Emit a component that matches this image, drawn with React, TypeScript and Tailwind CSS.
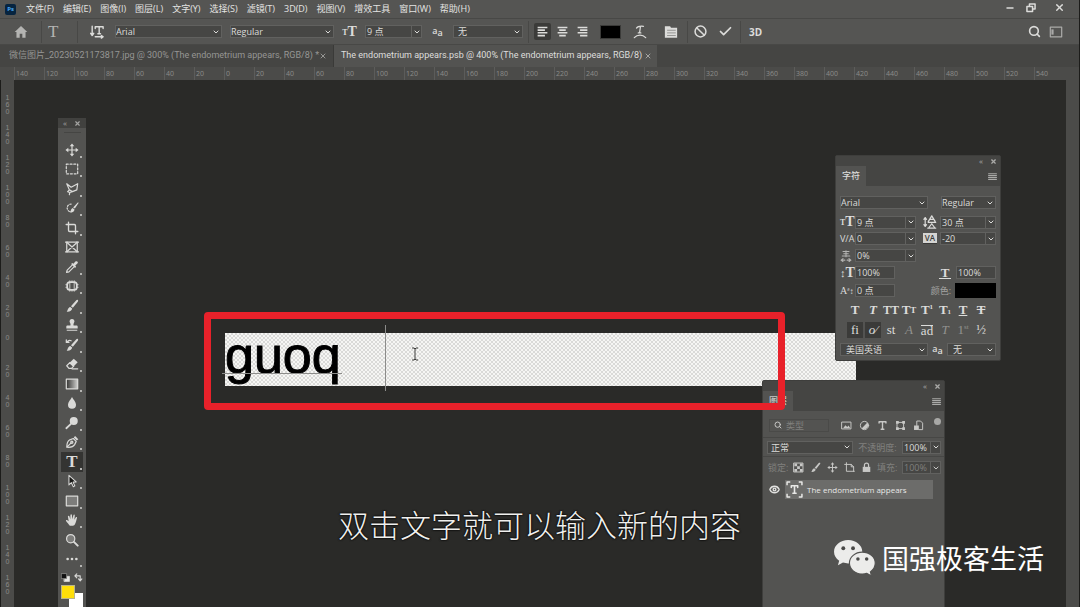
import React from 'react';
import { Ban, Check, ChevronDown, Crop, Eye, Minus, Search, X } from 'lucide-react';

const menus = ['文件(F)', '编辑(E)', '图像(I)', '图层(L)', '文字(Y)', '选择(S)', '滤镜(T)', '3D(D)', '视图(V)', '增效工具', '窗口(W)', '帮助(H)'];

const topMarks = Array.from({ length: 35 }, (_, i) => Math.abs(i * 20 - 140));
const leftMarks = Array.from({ length: 17 }, (_, i) => Math.abs(i * 20 - 160));

type SvgProps = { className?: string; children: React.ReactNode };

const Glyph = ({ className = 'size-[14px]', children }: SvgProps) => (
  <svg
    viewBox="0 0 16 16"
    className={`shrink-0 ${className}`}
    fill="none"
    stroke="currentColor"
    strokeWidth="1.4"
    strokeLinecap="round"
    strokeLinejoin="round"
    aria-hidden="true"
  >
    {children}
  </svg>
);

const solid = { fill: 'currentColor', stroke: 'none' };

const BrushShape = () => (
  <>
    <path {...solid} d="M14.6 1.2c.7.5.4 1.2 0 1.8L9 10 6.8 8.2l5.9-6.6c.6-.6 1.3-.8 1.9-.4z" />
    <path {...solid} d="M6 9l2.2 1.9c-.3 2.6-2.8 4-6.4 3.6C3.3 13.5 3 9.8 6 9z" />
  </>
);

const MoveShape = () => (
  <>
    <path d="M8 3v10M3 8h10" />
    <path {...solid} d="M8 .5l2.6 3.3H5.4zM8 15.5l2.6-3.3H5.4zM.5 8l3.3-2.6v5.2zM15.5 8l-3.3-2.6v5.2z" />
  </>
);

const tools: { name: string; icon: React.ReactNode; plain?: boolean }[] = [
  { name: '移动工具', icon: <Glyph><MoveShape /></Glyph> },
  { name: '矩形选框工具', icon: <Glyph><rect x="1.5" y="2.5" width="13" height="11" strokeDasharray="2.2 2.1" /></Glyph> },
  { name: '套索工具', icon: <Glyph><path d="M2 2l5 4 7.5-4-1 7-5 2L5 9 2 2zM5 9l-2 2 2.5 1-.5 2.5M5.5 12l3-1" /></Glyph> },
  {
    name: '快速选择工具',
    icon: (
      <Glyph>
        <path d="M7 3.5a4.5 4.5 0 1 0 0 9" strokeDasharray="1.5 1.9" />
        <path {...solid} d="M15.5 2.2l-4.2 6.4-2-1.3 5-5.3c.6-.5 1.3-.3 1.2.2zM8.8 8l2.1 1.6c-.4 2.7-2.5 3.6-5.4 3.2 1.6-1.2.8-3.8 3.3-4.8z" />
      </Glyph>
    ),
  },
  { name: '裁剪工具', icon: <Crop className="size-[14px]" strokeWidth={2.3} /> },
  {
    name: '图框工具',
    plain: true,
    icon: <Glyph><rect x="2" y="2.5" width="12" height="11" /><path d="M2 2.5l12 11M14 2.5l-12 11M.6 2.5h2M13.4 2.5h2M.6 13.5h2M13.4 13.5h2" /></Glyph>,
  },
  {
    name: '吸管工具',
    icon: (
      <Glyph>
        <path d="M8.5 5.5l-6 6-.7 2.7 2.7-.7 6-6" />
        <path {...solid} d="M7 4.5l1.3-1.2 1.3 1 2.3-2.5c1.7-1.5 3.8.6 2.3 2.3l-2.5 2.3 1 1.3L11.5 9z" />
      </Glyph>
    ),
  },
  {
    name: '修复工具',
    icon: <Glyph><rect x="2.5" y="3.5" width="11" height="9" rx="3" strokeWidth="2" /><path d="M5.5 2v12M8 2v2M8 12v2M10.5 2v12M1 6.5h2M1 9.5h2M13 6.5h2M13 9.5h2" strokeWidth="1" /></Glyph>,
  },
  { name: '画笔工具', icon: <Glyph><BrushShape /></Glyph> },
  {
    name: '仿制图章工具',
    icon: <Glyph><path {...solid} d="M8 1a2.8 2.8 0 0 1 2.3 4.4c-.7 1.1-.7 2.1-.5 3.1H13c1 0 1.5.6 1.5 1.5v2h-13v-2c0-.9.5-1.5 1.5-1.5h3.2c.2-1 .2-2-.5-3.1A2.8 2.8 0 0 1 8 1zM2 13.3h12v1.4H2z" /></Glyph>,
  },
  { name: '历史记录画笔工具', icon: <Glyph><BrushShape /><path d="M1.5 2v3h3M2 5c1.5-2 3.5-2.5 5-1.8" /></Glyph> },
  {
    name: '橡皮擦工具',
    icon: <Glyph><path d="M5.5 6.5L2 10l2.5 3h3L10 10.500z" /><path {...solid} d="M10 2l4.5 4-5 5L5 6.8z" /><path d="M8 13.5h6.5" /></Glyph>,
  },
  {
    name: '渐变工具',
    icon: (
      <Glyph>
        <defs>
          <linearGradient id="toolGradient">
            <stop offset="0" stopColor="#333331" />
            <stop offset="1" stopColor="#d0d0ce" />
          </linearGradient>
        </defs>
        <rect x="1.5" y="2.5" width="13" height="11" fill="url(#toolGradient)" />
      </Glyph>
    ),
  },
  { name: '模糊工具', icon: <Glyph><path {...solid} d="M8 1c1.5 3 4.6 5.6 4.6 9a4.6 4.6 0 0 1-9.2 0C3.4 6.6 6.5 4 8 1z" /></Glyph> },
  { name: '减淡工具', icon: <Glyph><circle cx="10" cy="5.8" r="4.6" {...solid} /><path d="M6.5 9.2L1.5 14" strokeWidth="2" /></Glyph> },
  {
    name: '钢笔工具',
    icon: <Glyph><path d="M2 14c0-4 1-7 3.5-8.5l4-1.5 3.3 3.3L11 11c-1.5 2.5-5 3.500-9 3zM2.5 13.5L7 9" /><circle cx="7.8" cy="8.3" r="1.2" /><path {...solid} d="M10 2.8l1.6-1.6 3.6 3.6-1.6 1.6z" /></Glyph>,
  },
  { name: '横排文字工具', icon: <span className="font-['Liberation_Serif',serif] text-[17px] leading-[16px] font-bold">T</span> },
  { name: '路径选择工具', icon: <Glyph><path d="M4.5 1.5v11l2.8-2.6 2.2 4.6 1.8-.9-2.1-4.3 3.6-.3z" fill="#1a1a18" strokeWidth="1.2" /></Glyph> },
  { name: '矩形工具', icon: <Glyph><rect x="1.5" y="2.5" width="13" height="11" fill="#7d7d7b" /></Glyph> },
  {
    name: '抓手工具',
    icon: (
      <Glyph>
        <path {...solid} d="M5.5 14.5C4 13 2.5 10.8 1.2 9.2c-.5-1 .7-1.7 1.5-1l1.5 1.2L3.300 4c-.1-1.1 1.3-1.4 1.7-.3l1 3.5.2-5c.1-1.1 1.6-1.1 1.7 0l.5 4.8 1.2-4.5c.3-1 1.7-.8 1.6.3l-.5 5 1.5-2.7c.6-.9 1.8-.4 1.5.7-.7 2.3-1 4.7-2.2 6.7-.6 1.2-1.3 2-2.5 2z" />
      </Glyph>
    ),
  },
  { name: '缩放工具', plain: true, icon: <Glyph><circle cx="6.5" cy="6.5" r="4.7" fill="#7d7d7b" /><path d="M10.2 10.2l4.3 4.3" strokeWidth="2.2" /></Glyph> },
  {
    name: '编辑工具栏',
    icon: <Glyph><circle cx="3" cy="8" r="1.5" {...solid} /><circle cx="8" cy="8" r="1.5" {...solid} /><circle cx="13" cy="8" r="1.5" {...solid} /></Glyph>,
  },
];

interface FieldProps {
  label: string;
  value: string;
  className: string;
  muted?: boolean;
}

// Drop-down list
const Dropdown: React.FC<FieldProps> = ({ label, value, className }) => (
  <div className={`flex h-[13px] items-center border border-[#61615f] bg-[#464644] ${className}`}>
    <select aria-label={label} className="h-full min-w-0 flex-1 appearance-none bg-transparent text-[9px] leading-[11px] outline-none">
      <option>{value}</option>
    </select>
    <ChevronDown className="pointer-events-none mr-px size-[8px] shrink-0" strokeWidth={3} />
  </div>
);

// Editable value with a list of presets beside it
const Combo: React.FC<FieldProps> = ({ label, value, className, muted }) => (
  <div className={`flex h-[13px] border border-[#61615f] bg-[#464644] ${className}`}>
    <input
      aria-label={label}
      defaultValue={value}
      className={`min-w-0 flex-1 bg-transparent pl-px text-[9px] leading-[11px] outline-none ${muted ? 'text-[#80807e]' : ''}`}
    />
    <button aria-label={`${label}预设`} className="flex w-[10px] shrink-0 items-center justify-center border-l border-[#61615f]">
      <ChevronDown className="size-[8px]" strokeWidth={3} />
    </button>
  </div>
);

const TextField: React.FC<FieldProps> = ({ label, value, className }) => (
  <input
    aria-label={label}
    defaultValue={value}
    className={`h-[13px] border border-[#61615f] bg-[#464644] pl-px text-[9px] leading-[11px] outline-none ${className}`}
  />
);

const Separator = () => <div className="h-[22px] w-px shrink-0 bg-[#484846]" />;

const BigT = ({ children }: { children?: React.ReactNode }) => (
  <span className="flex items-end font-['Liberation_Serif',serif] leading-[12px] font-bold">
    {children}
    <span className="text-[14px]">T</span>
  </span>
);

const SizeIcon = () => <BigT><span className="text-[8px] leading-[10px]">T</span></BigT>;

const SmallAa = () => (
  <span className="flex text-[9px] leading-[9px] font-semibold">
    <span className="-mt-px">a</span>
    <span className="mt-px">a</span>
  </span>
);

const AlignIcon = ({ d }: { d: string }) => (
  <Glyph className="size-[13px]"><path d={d} strokeWidth="2" strokeLinecap="butt" /></Glyph>
);

const alignments = [
  { name: '左对齐文本', d: 'M2 3h12M2 6.3h9M2 9.6h12M2 13h9' },
  { name: '居中对齐文本', d: 'M2 3h12M4 6.3h8M2 9.6h12M4 13h8' },
  { name: '右对齐文本', d: 'M2 3h12M5 6.3h9M2 9.6h12M5 13h9' },
];

const MenuBar = () => (
  <header className="flex h-[18px] shrink-0 items-center bg-[#555553] pl-[5px]">
    <span className="flex h-[11px] w-[11px] items-center justify-center rounded-[2px] bg-[#062440] text-[6px] leading-none font-bold text-[#4aa8f5]">Ps</span>
    <nav className="ml-[10px] flex flex-1 gap-[9px] whitespace-nowrap">
      {menus.map((menu) => (
        <button key={menu} className="text-[9px] leading-[14px] text-[#e4e4e2]">{menu}</button>
      ))}
    </nav>
    <div className="mb-[3px] flex items-center gap-[11px] pr-[14px]">
      <button aria-label="最小化"><Minus className="size-[10px]" strokeWidth={4} /></button>
      <button aria-label="还原" className="mr-[7px]">
        <Glyph className="size-[10px]"><path d="M5.5 5.5v-4h9v8h-4M1.5 5.5h9v8h-9z" strokeWidth="2.4" /></Glyph>
      </button>
      <button aria-label="关闭"><X className="size-[11px]" strokeWidth={3} /></button>
    </div>
  </header>
);

const OptionsBar = () => (
  <div className="flex h-[27px] shrink-0 items-center border-y border-[#484846] bg-[#555553]">
    <button aria-label="主页" className="ml-[14px] text-[#b4b4b2]">
      <Glyph><path {...solid} d="M8 1L.8 8h2v6.5h3.7V10h3v4.5h3.7V8h2z" /></Glyph>
    </button>
    <div className="ml-[13px]"><Separator /></div>
    <span className="flex w-[35px] pl-1.5 font-['Liberation_Serif',serif] text-[17px] leading-none text-[#b4b4b2]">T</span>
    <Separator />
    <button aria-label="切换文本取向" className="flex w-[37px] justify-center">
      <Glyph><path d="M2.5 1.5v10M.8 9.5L2.5 12l1.7-2.5M6 4V2h9v2M10.5 2v8M9 10h3M6 13.5h8.5M13 12l2 1.5-2 1.5" strokeWidth="1.6" /></Glyph>
    </button>
    <Dropdown label="字体" value="Arial" className="w-[107px]" />
    <Dropdown label="字体样式" value="Regular" className="ml-2 w-[104px]" />
    <span className="flex w-[31px] justify-center"><SizeIcon /></span>
    <Combo label="字体大小" value="9 点" className="w-[57px]" />
    <span className="flex w-[31px] justify-center"><SmallAa /></span>
    <Dropdown label="消除锯齿" value="无" className="w-[70px] pl-[4px]" />
    <div className="ml-[5px]"><Separator /></div>
    <div className="ml-[5px] flex gap-[3px]">
      {alignments.map((item, i) => (
        <button key={item.name} aria-label={item.name} className={`flex size-[17px] items-center justify-center rounded-[2px] ${i === 0 ? 'bg-[#3b3b39]' : ''}`}>
          <AlignIcon d={item.d} />
        </button>
      ))}
    </div>
    <button aria-label="文本颜色" className="ml-[9px] h-[14px] w-[21px] border border-[#3b3b39] bg-black" />
    <button aria-label="文字变形" className="ml-[12px]">
      <Glyph><path d="M4 3.5c1.5-2.3 5-2.3 8-2M8.5 2l-1 7M6 9h3M1.5 14.5c3.500-4 9.500-4 13 0" /></Glyph>
    </button>
    <button aria-label="切换字符和段落面板" className="ml-[17px]">
      <Glyph><path {...solid} d="M1 1.5h6L8 3h7v11.500H1z" /><path d="M4 6h9M4 9h9M4 12h9" stroke="#8b8b89" strokeWidth="1" /></Glyph>
    </button>
    <div className="ml-[9px]"><Separator /></div>
    <button aria-label="取消" className="ml-[6px]"><Ban className="size-[13px]" strokeWidth={2.8} /></button>
    <button aria-label="提交" className="ml-[11px]"><Check className="size-[15px]" strokeWidth={2.8} /></button>
    <div className="ml-[7px]"><Separator /></div>
    <button className="ml-[8px] text-[10px] leading-none font-bold">3D</button>
    <div className="ml-auto flex items-center gap-[8px] pr-[16px]">
      <button aria-label="搜索"><Search className="size-[13px]" strokeWidth={3} /></button>
      <button aria-label="选择工作区" className="text-[#aaaaa8]">
        <Glyph><rect x="1.5" y="2.5" width="13" height="11" /><path d="M4 5v6" strokeWidth="2.5" strokeLinecap="butt" /></Glyph>
      </button>
    </div>
  </div>
);

const DocumentTabs = () => (
  <div className="flex h-[22px] shrink-0 bg-[#454543] font-[Roboto,'Noto_Sans_CJK_SC',sans-serif] text-[9px] whitespace-nowrap" role="tablist">
    <div className="flex w-[334px] items-center justify-between border-r border-[#3a3a38] pr-[7px] pl-[9px] text-[#969694]">
      <button role="tab" aria-selected="false">微信图片_20230521173817.jpg @ 300% (The endometrium appears, RGB/8) *</button>
      <button aria-label="关闭标签"><X className="size-[8px]" strokeWidth={3} /></button>
    </div>
    <div className="flex w-[323px] items-center justify-between bg-[#535351] pr-[5px] pl-[7px] text-[#dededc]">
      <button role="tab" aria-selected="true">The endometrium appears.psb @ 400% (The endometrium appears, RGB/8)</button>
      <button aria-label="关闭标签" className="text-[#a4a4a2]"><X className="size-[8px]" strokeWidth={3} /></button>
    </div>
  </div>
);

const TopRuler = () => (
  <div className="flex h-[13px] shrink-0 overflow-hidden bg-[#4b4b49] pl-[14px] text-[7px] leading-[13px] text-[#8c8c8a]">
    {topMarks.map((mark, i) => (
      <span key={i} className="w-[30px] shrink-0 border-l border-[#5c5c5a] pl-px">{mark}</span>
    ))}
  </div>
);

const LeftRuler = () => (
  <div className="w-[14px] shrink-0 overflow-hidden border-l border-[#1c1c1a] bg-[#4b4b49] pt-[14px] text-center font-['Liberation_Sans',Arial,sans-serif] text-[7px] leading-[7px] text-[#8c8c8a]">
    {leftMarks.map((mark, i) => (
      <div key={i} className="flex h-[30px] flex-col">
        {String(mark).split('').map((digit, j) => <span key={j}>{digit}</span>)}
      </div>
    ))}
  </div>
);

const Toolbox = () => (
  <aside className="absolute top-[118px] left-[58px] flex h-[500px] w-[28px] flex-col items-center rounded-t-[2px] bg-[#535351] text-[#dadad8]">
    <div className="flex h-[10px] w-full shrink-0 items-center justify-between bg-[#41413f] px-[5px] text-[#a4a4a2]">
      <span className="text-[8px] leading-none">«</span>
      <button aria-label="关闭工具栏"><X className="size-[7px]" strokeWidth={4} /></button>
    </div>
    <div className="mt-[4px] h-px w-[17px] shrink-0 bg-[#454543]" />
    <div className="mt-[7px] flex h-[429px] w-[22px] shrink-0 flex-col">
      {tools.map((tool) => (
        <button
          key={tool.name}
          aria-label={tool.name}
          className={`relative flex min-h-0 flex-1 items-center justify-center ${tool.name === '横排文字工具' ? 'bg-[#343432]' : ''}`}
        >
          {tool.icon}
          {!tool.plain && <span className="absolute right-px bottom-[2px] size-[2px] bg-[#b4b4b2]" />}
        </button>
      ))}
    </div>
    <div className="mt-[4px] flex w-[22px] shrink-0 justify-between">
      <button aria-label="默认前景色和背景色">
        <Glyph className="size-[9px]"><rect x="6" y="6" width="9" height="9" fill="#e8e8e6" /><rect x="1" y="1" width="9" height="9" fill="#111" stroke="#8c8c8a" /></Glyph>
      </button>
      <button aria-label="切换前景色和背景色">
        <Glyph className="size-[9px]"><path d="M2 5h9v8M5 1.5L1.5 5 5 8.5M8 10.5l3 3.5 3-3.5" strokeWidth="2" /></Glyph>
      </button>
    </div>
    <div className="relative mt-[3px] h-[22px] w-[22px] shrink-0">
      <button aria-label="背景色" className="absolute right-0 bottom-0 size-[14px] bg-white" />
      <button aria-label="前景色" className="absolute top-0 left-0 size-[14px] border border-[#b9b48a] bg-[#ffdf0a]" />
    </div>
  </aside>
);

const PanelHeader = ({ title }: { title: string }) => (
  <>
    <div className="flex h-[10px] items-center justify-end gap-[7px] bg-[#454543] pr-[3px] text-[#aaaaa8]">
      <span className="text-[8px] leading-none">«</span>
      <button aria-label={`关闭${title}`}><X className="size-[7px]" strokeWidth={4} /></button>
    </div>
    <div className="flex h-[20px] items-center justify-between bg-[#454543] pr-[3px]">
      <h2 className="flex h-full items-center bg-[#535351] px-[6px] text-[9px] font-medium">{title}</h2>
      <button aria-label={`${title}菜单`} className="text-[#aaaaa8]">
        <Glyph className="size-[9px]"><path d="M1 3h14M1 6.3h14M1 9.6h14M1 13h14" strokeWidth="2" /></Glyph>
      </button>
    </div>
  </>
);

const serif = "font-['Liberation_Serif',serif]";

const styleButtons = [
  { name: '仿粗体', icon: <b>T</b> },
  { name: '仿斜体', icon: <i>T</i> },
  { name: '全部大写字母', icon: <span className="text-[12px]">TT</span> },
  { name: '小型大写字母', icon: <>T<span className="text-[9px]">T</span></> },
  { name: '上标', icon: <>T<sup className="text-[7px]">1</sup></> },
  { name: '下标', icon: <>T<sub className="text-[7px]">1</sub></> },
  { name: '下划线', icon: <u>T</u> },
  { name: '删除线', icon: <s>T</s> },
];

const openTypeButtons = [
  { name: '标准连字', icon: <>fi</>, active: true },
  { name: '上下文替代字', icon: <i>o⁄</i>, active: true },
  { name: '自由连字', icon: <>st</> },
  { name: '花饰字', icon: <i>A</i>, dim: true },
  { name: '文体替代字', icon: <span className="border-t leading-[9px]">ad</span> },
  { name: '标题替代字', icon: <i>T</i>, dim: true },
  { name: '序数字', icon: <>1<sup className="text-[7px]">st</sup></>, dim: true },
  { name: '分数字', icon: <>½</> },
];

const CharacterPanel = () => (
  <section className="absolute top-[155px] left-[835px] w-[166px] rounded-[2px] border border-[#3e3e3c] bg-[#535351] text-[#dcdcda]">
    <PanelHeader title="字符" />
    <div className="flex flex-col px-[4px] pt-[10px] pb-[4px]">
      <div className="flex justify-between">
        <Dropdown label="字符字体" value="Arial" className="w-[88px]" />
        <Dropdown label="字符样式" value="Regular" className="w-[55px]" />
      </div>
      <div className="mt-[6px] flex items-center">
        <span className="flex w-[15px]"><SizeIcon /></span>
        <Combo label="字号" value="9 点" className="w-[61px]" />
        <span className="ml-[7px] flex w-[17px]">
          <Glyph><path d="M2.5 3v10M1 5l1.5-2L4 5M1 11l1.5 2L4 11M6 7.5L10 1l4 6.5M8 5h4.5M6 8.5h8.500M7 14l3-4 3 4M5.5 15h9" /></Glyph>
        </span>
        <Combo label="行距" value="30 点" className="w-[56px]" />
      </div>
      <div className="mt-[3px] flex items-center">
        <span className="w-[15px] text-[9px] leading-none">V/A</span>
        <Combo label="字距微调" value="0" className="w-[61px]" />
        <span className="ml-[7px] flex w-[17px]">
          <span className="w-[14px] border-b bg-[#d4d4d2] text-center text-[8px] leading-[10px] font-semibold text-[#3a3a38]">VA</span>
        </span>
        <Combo label="字距调整" value="-20" className="w-[56px]" />
      </div>
      <div className="mt-[4px] flex items-center">
        <span className="flex w-[15px] text-[#b4b4b2]">
          <Glyph className="size-[12px]"><path d="M4 2h8M5 5h6M8 1v8M3 8h10M1.5 13.5h5M9.5 13.5h5M4 11.5l-2.5 2 2.5 2M12 11.5l2.5 2-2.5 2" /></Glyph>
        </span>
        <Combo label="比例间距" value="0%" className="w-[61px]" />
      </div>
      <div className="mt-[4px] flex items-center">
        <span className="flex w-[15px]"><BigT><span className="text-[11px]">↕</span></BigT></span>
        <TextField label="垂直缩放" value="100%" className="w-[40px]" />
        <span className="ml-auto flex w-[17px]">
          <span className={`${serif} w-[12px] border-b text-center text-[13px] leading-[11px] font-bold`}>T</span>
        </span>
        <TextField label="水平缩放" value="100%" className="w-[40px]" />
      </div>
      <div className="mt-[4px] flex items-center">
        <span className={`${serif} w-[15px] text-[10px] leading-none`}>A<span className="text-[8px]">ª↕</span></span>
        <TextField label="基线偏移" value="0 点" className="w-[40px]" />
        <span className="mr-[4px] ml-auto text-[9px] leading-none text-[#a4a4a2]">颜色:</span>
        <button aria-label="颜色" className="h-[15px] w-[41px] bg-black" />
      </div>
      <div className={`${serif} mt-[4px] flex justify-center text-[13px] leading-[16px]`}>
        {styleButtons.map((item) => (
          <button key={item.name} aria-label={item.name} className="flex h-[16px] w-[18px] items-center justify-center font-bold">{item.icon}</button>
        ))}
      </div>
      <div className={`${serif} mt-[4px] flex justify-center text-[13px] leading-[16px]`}>
        {openTypeButtons.map((item) => (
          <button
            key={item.name}
            aria-label={item.name}
            className={`flex h-[16px] w-[18px] items-center justify-center border-x border-[#535351] ${item.active ? 'bg-[#3b3b39]' : ''} ${item.dim ? 'text-[#92928f]' : ''}`}
          >
            {item.icon}
          </button>
        ))}
      </div>
      <div className="mt-[5px] flex items-center">
        <Dropdown label="语言" value="美国英语" className="w-[88px] pl-[5px]" />
        <span className="flex flex-1 justify-center"><SmallAa /></span>
        <Dropdown label="消除锯齿方法" value="无" className="w-[49px] pl-[5px]" />
      </div>
    </div>
  </section>
);

const layerFilters = [
  { name: '像素图层', icon: <><rect x="1.5" y="3" width="13" height="10" /><path {...solid} d="M3 12l3.500-4.500L9 10l2-2 2.500 4z" /></> },
  { name: '调整图层', icon: <><circle cx="8" cy="8" r="6" /><path {...solid} d="M3.8 12.2a6 6 0 0 0 8.400-8.400z" /></> },
  { name: '文字图层', icon: <path d="M3 4.5v-2h10v2M8 2.5v11M6 13.5h4" strokeWidth="2" /> },
  { name: '形状图层', icon: <><path d="M3.5 3.5h9v9h-9z" /><path {...solid} d="M1.5 1.5h4v4h-4zM10.5 1.5h4v4h-4zM1.5 10.5h4v4h-4zM10.5 10.5h4v4h-4z" /></> },
  { name: '智能对象', icon: <><path d="M5.5 8V1.5H11l3 3V14H9" /><path {...solid} d="M1.5 8h7v6.5h-7z" /></> },
];

const lockButtons = [
  { name: '锁定透明像素', icon: <><rect x="1.5" y="1.5" width="13" height="13" /><path {...solid} d="M2 2h4v4H2zM10 2h4v4h-4zM6 6h4v4H6zM2 10h4v4H2zM10 10h4v4h-4z" /></> },
  { name: '锁定图像像素', icon: <BrushShape /> },
  { name: '锁定位置', icon: <MoveShape /> },
  { name: '防止嵌套', icon: <path d="M1 3.5h9.5L14 7v6.5M3.5 1v12.5H15M10.5 3.5V7H14" /> },
  { name: '锁定全部', icon: <><path {...solid} d="M2.5 7h11v7.5h-11z" /><path d="M5 7V4.5a3 3 0 0 1 6 0V7" strokeWidth="1.8" /></> },
];

const LayersPanel = () => (
  <section className="absolute top-[380px] left-[762px] h-[240px] w-[183px] rounded-t-[2px] border border-[#3e3e3c] bg-[#535351] text-[#c8c8c6]">
    <PanelHeader title="图层" />
    <div className="flex h-[27px] items-center border-b border-[#474745] pt-[2px] pl-[6px]">
      <label className="flex h-[13px] w-[60px] items-center gap-1 border border-[#4a4a48] pl-1">
        <Search className="size-[8px] shrink-0" strokeWidth={3} />
        <input aria-label="筛选类型" placeholder="类型" className="w-full min-w-0 bg-transparent text-[9px] leading-[11px] outline-none placeholder:text-[#80807e]" />
      </label>
      <div className="ml-[12px] flex gap-[7px]">
        {layerFilters.map((item) => (
          <button key={item.name} aria-label={item.name}><Glyph className="size-[11px]">{item.icon}</Glyph></button>
        ))}
      </div>
      <button aria-label="打开或关闭图层滤镜" className="mr-[3px] mb-[8px] ml-auto size-[7px] rounded-full bg-[#a8a8a6]" />
    </div>
    <div className="flex h-[19px] items-center border-b border-[#474745] pr-[3px] pl-[4px] text-[#dcdcda]">
      <Dropdown label="混合模式" value="正常" className="w-[86px] pl-[3px]" />
      <span className="mx-auto text-[9px] leading-none text-[#80807e]">不透明度:</span>
      <Combo label="不透明度" value="100%" className="w-[39px]" />
    </div>
    <div className="flex h-[23px] items-center pr-[3px] pb-[2px] pl-[5px]">
      <span className="text-[9px] leading-none text-[#80807e]">锁定:</span>
      <div className="ml-[5px] flex gap-[6px]">
        {lockButtons.map((item) => (
          <button key={item.name} aria-label={item.name}><Glyph className="size-[11px]">{item.icon}</Glyph></button>
        ))}
      </div>
      <span className="mx-auto text-[9px] leading-none text-[#80807e]">填充:</span>
      <Combo label="填充" value="100%" className="w-[39px]" muted />
    </div>
    <div className="flex h-[19px] items-center">
      <button aria-label="指示图层可见性" className="flex w-[22px] justify-center text-[#e2e2e0]">
        <Eye className="size-[11px]" strokeWidth={3} />
      </button>
      <button className="flex h-full w-[148px] items-center bg-[#6c6c6a] pl-px text-[8px] text-[#e8e8e6]">
        <span className="flex size-[17px] items-center justify-center">
          <Glyph className="size-[17px]"><path d="M1 4V1h3M12 1h3v3M15 12v3h-3M4 15H1v-3" strokeLinecap="butt" /><path d="M5 6V4.5h6V6M8 4.5v7M6.5 11.5h3" strokeWidth="1.5" /></Glyph>
        </span>
        <span className="ml-[4px]">The endometrium appears</span>
      </button>
    </div>
  </section>
);

const Artwork = () => (
  <>
    <div className="absolute top-[333px] left-[225px] h-[53px] w-[631px] bg-[repeating-conic-gradient(#dadad8_0_25%,#f6f6f4_0_50%)] bg-[length:4px_4px]">
      <p className="font-['Liberation_Sans',Arial,sans-serif] text-[52px] leading-[44px] text-black [-webkit-text-stroke:1px_#000]">guoq</p>
    </div>
    <div className="absolute top-[373px] left-[222px] h-px w-[120px] bg-[#8c8c8a]" />
    <div className="absolute top-[325px] left-[385px] h-[66px] w-px bg-[#8c8c8a]" />
    <svg viewBox="0 0 8 14" className="absolute top-[347px] left-[411px] h-[14px] w-[8px]" fill="none" stroke="#3c3c3a" aria-hidden="true">
      <path d="M1 1h2l1 1 1-1h2M4 2v10M1 13h2l1-1 1 1h2" />
    </svg>
  </>
);

const Watermark = () => (
  <div className="absolute right-[35px] bottom-[29px] flex items-center gap-[6px] text-white">
    <svg viewBox="0 0 44 40" className="h-[39px] w-[43px]" aria-hidden="true">
      <path fill="#ececea" d="M15.5 1C7.5 1 1 6.3 1 13c0 3.8 2 7.1 5.3 9.3L5 27l5.2-2.8c1.7.5 3.5.8 5.3.8C23.5 25 30 19.7 30 13S23.5 1 15.5 1z" />
      <path fill="#ececea" stroke="#535351" strokeWidth="1.2" d="M30 13.5c-7.4 0-13.2 5-13.2 11.2S22.6 36 30 36c1.6 0 3.2-.3 4.6-.7l4.900 2.700-1.200-4.300c3-2.100 5-5.300 5-9 0-6.200-5.900-11.200-13.300-11.200z" />
      <circle cx="10.5" cy="9.5" r="2" fill="#4a4a48" />
      <circle cx="20.5" cy="9.5" r="2" fill="#4a4a48" />
      <circle cx="25.5" cy="20.5" r="1.8" fill="#4a4a48" />
      <circle cx="34.5" cy="20.5" r="1.8" fill="#4a4a48" />
    </svg>
    <span className="text-[27px] leading-[38px]">国强极客生活</span>
  </div>
);

const App: React.FC = () => (
  <div className="relative flex h-screen flex-col overflow-hidden border-r border-[#1c1c1a] bg-[#2a2a28] font-['Open_Sans','Noto_Sans_CJK_SC',sans-serif] text-[#dcdcda]">
    <MenuBar />
    <OptionsBar />
    <DocumentTabs />
    <TopRuler />
    <main className="flex min-h-0 flex-1">
      <LeftRuler />
      <div className="flex-1 bg-[#2a2a28]" />
      <div className="w-[13px] shrink-0 bg-[#4b4b49]" />
    </main>

    {/* Canvas content and floating panels */}
    <Artwork />
    <Toolbox />
    <CharacterPanel />
    <LayersPanel />
    <div className="absolute top-[312px] left-[204px] h-[98px] w-[581px] rounded-[4px] border-[7px] border-[#e8212a]" />

    <p className="absolute inset-x-0 bottom-[59px] text-center text-[31px] leading-[46px] font-light text-[#f0f0ee] [text-shadow:0_0_2px_#000,0_0_2px_#000]">
      双击文字就可以输入新的内容
    </p>
    <Watermark />
  </div>
);

export default App;
